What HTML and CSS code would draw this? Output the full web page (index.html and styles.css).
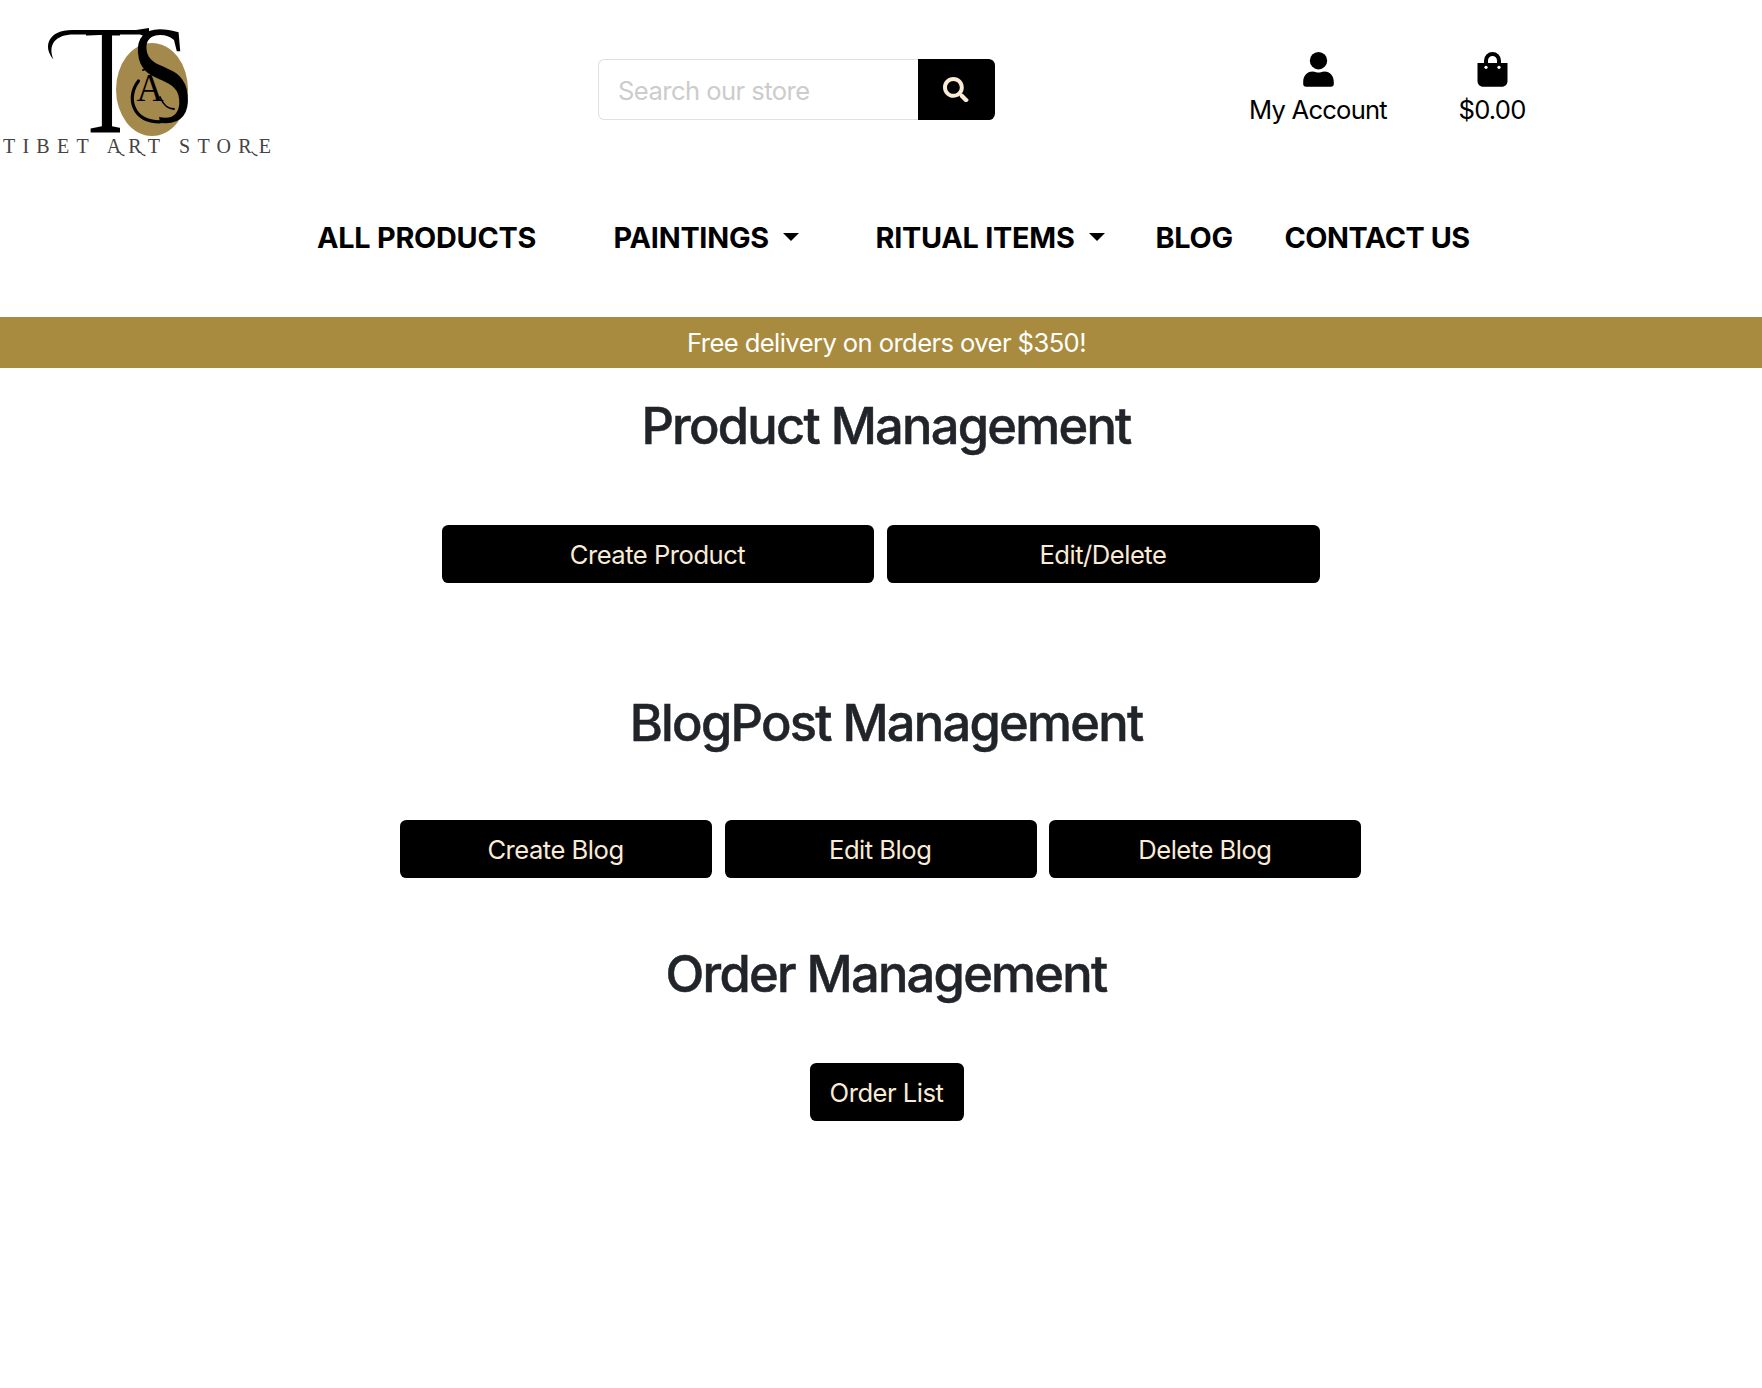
FILE: index.html
```html
<!DOCTYPE html>
<html lang="en">
<head>
<meta charset="utf-8">
<title>Tibet Art Store</title>
<link rel="stylesheet" href="styles.css">
</head>
<body>
<header class="header">
  <div class="topbar">
    <a class="logo" href="#">
      <svg width="280" height="180" viewBox="0 0 280 180" aria-label="Tibet Art Store">
        <clipPath id="bar"><path d="M86 34H120V140H86Z"/></clipPath>
        <clipPath id="bowl"><path d="M120 20H200V130H156V84H120Z"/></clipPath>
        <ellipse class="logo-disc" cx="152" cy="89.500" rx="36" ry="46.500"/>
        <path class="fill" d="M53.500 59.500C42 46 49 30 72 30H136L149 28V38L140 34.500H74C55 34.500 47.500 45 53.500 59.500Z"/>
        <text class="mono" x="74" y="132.500" font-size="159" textLength="66" lengthAdjust="spacingAndGlyphs" clip-path="url(#bar)">T</text>
        <text class="mono" transform="translate(-7 0) skewX(5)" x="133" y="121.500" font-size="140" textLength="60" lengthAdjust="spacingAndGlyphs" clip-path="url(#bowl)">S</text>
        <path class="swash" d="M138.500 81C126 97 132 121.800 160 121.800" stroke-width="3.200"/>
        <text class="mono" x="136.500" y="101" font-size="40" textLength="27" lengthAdjust="spacingAndGlyphs">A</text>
        <path class="swash" d="M143 70C147 68 150 69 151 74M160 97C164 106 168 109 174 109" stroke-width="1.800"/>
        <text class="wordmark" x="3" y="153" font-size="20" textLength="268">TIBET ART STORE</text>
        <path class="swash thin" d="M119 152Q121 155 124 155.500M140 152Q142 155 145 155.500M252 152Q254 155 257 155.500"/>
      </svg>
    </a>
    <form class="search">
      <input class="search-input" type="text" placeholder="Search our store">
      <button class="search-btn" type="button" aria-label="Search">
        <svg width="25.600" height="25.600" viewBox="0 0 512 512"><path d="M505 442.700L405.300 343c-4.500-4.500-10.600-7-17-7H372c27.600-35.300 44-79.700 44-128C416 93.100 322.900 0 208 0S0 93.100 0 208s93.100 208 208 208c48.300 0 92.700-16.400 128-44v16.300c0 6.400 2.500 12.500 7 17l99.700 99.700c9.400 9.400 24.600 9.400 33.900 0l28.300-28.300c9.400-9.400 9.400-24.600.1-34zM208 336c-70.700 0-128-57.200-128-128 0-70.700 57.200-128 128-128 70.700 0 128 57.200 128 128 0 70.700-57.200 128-128 128z"/></svg>
      </button>
    </form>
    <a class="tool account" href="#">
      <svg width="31" height="35" viewBox="0 0 31 35"><circle cx="15.500" cy="8.700" r="8.700"/><path d="M9.500 19.500C12 19.500 13 20.600 15.500 20.600S19 19.500 21.500 19.500C27 19.500 30.800 24 30.800 30V32C30.800 33.700 29.600 34.800 28 34.800H3C1.400 34.800.2 33.700.2 32V30C.2 24 4 19.500 9.500 19.500Z"/></svg>
      <span>My Account</span>
    </a>
    <a class="tool bag" href="#">
      <svg width="31" height="35" viewBox="0 0 31 35"><path d="M.5 11H30.500V29C30.500 32.400 28 34.800 24.800 34.800H6.200C3 34.800.5 32.400.5 29Z"/><path class="handle" d="M9 12V8.500A6.500 6.500 0 0 1 22 8.500V12"/><circle class="hole" cx="9" cy="15.300" r="1.600"/><circle class="hole" cx="22" cy="15.300" r="1.600"/></svg>
      <span>$0.00</span>
    </a>
  </div>
  <nav class="nav">
    <a class="nav-link all" href="#">ALL PRODUCTS</a>
    <a class="nav-link paintings" href="#">PAINTINGS<i class="caret"></i></a>
    <a class="nav-link ritual" href="#">RITUAL ITEMS<i class="caret"></i></a>
    <a class="nav-link blog" href="#">BLOG</a>
    <a class="nav-link contact" href="#">CONTACT US</a>
  </nav>
</header>
<div class="banner">Free delivery on orders over $350!</div>
<main class="main">
  <section class="product">
    <h2 class="title">Product Management</h2>
    <div class="row two"><a class="btn" href="#">Create Product</a><a class="btn" href="#">Edit/Delete</a></div>
  </section>
  <section class="blogpost">
    <h2 class="title">BlogPost Management</h2>
    <div class="row three"><a class="btn" href="#">Create Blog</a><a class="btn" href="#">Edit Blog</a><a class="btn" href="#">Delete Blog</a></div>
  </section>
  <section class="order">
    <h2 class="title">Order Management</h2>
    <div class="row one"><a class="btn" href="#">Order List</a></div>
  </section>
</main>
</body>
</html>
```
FILE: styles.css
```css
* { box-sizing: border-box; }
body {
  margin: 0;
  background: #fff;
  color: #212529;
  font-family: Inter, "Liberation Sans", sans-serif;
  font-size: 25.600px;
  line-height: 38.400px;
  letter-spacing: -0.500px;
}
a { color: inherit; text-decoration: none; }
.header { height: 317px; color: #000; }
.topbar { display: flex; height: 180px; }
.logo { width: 598px; }
.logo svg { display: block; }
.logo-disc { fill: #a3894c; }
.mono, .wordmark { font-family: "Liberation Serif", serif; letter-spacing: 0; fill: #000; }
.wordmark { fill: #444; }
.swash { fill: none; stroke: #000; stroke-linecap: round; }
.thin { stroke: #444; stroke-width: 1.300; }
.search { display: flex; width: 397px; height: 61px; margin-top: 59px; }
.search-input {
  width: 320px;
  padding: 3px 19px 0;
  border: 1px solid #dee2e6;
  border-right: 0;
  border-radius: 6.400px 0 0 6.400px;
  font: inherit;
  letter-spacing: -0.560px;
}
.search-input::placeholder { color: #ccc; opacity: 1; }
.search-btn {
  width: 77px;
  padding: 0 1px 0 0;
  border: 0;
  border-radius: 0 6.400px 6.400px 0;
  background: #000;
  fill: #faebd7;
}
.search-btn svg { display: block; margin: 0 auto; }
.tool { display: flex; flex-direction: column; align-items: center; padding-top: 52px; white-space: nowrap; letter-spacing: -0.780px; }
.tool svg { margin-bottom: 4px; }
.account { width: 138px; margin-left: 254px; }
.bag { width: 66px; margin-left: 72px; }
.handle { fill: none; stroke: #000; stroke-width: 4; }
.hole { fill: #fff; }
.nav {
  display: flex;
  padding: 36px 0 0 317px;
  font-size: 28.800px;
  font-weight: 700;
  line-height: 43px;
  letter-spacing: -0.230px;
}
.nav-link { display: flex; align-items: center; white-space: nowrap; }
.caret {
  margin: -2px 0 0 14px;
  border: 8px solid transparent;
  border-top-color: #000;
  border-bottom: 0;
}
.all { width: 296.500px; }
.paintings { width: 262px; }
.ritual { width: 280px; }
.blog { width: 129px; }
.contact { letter-spacing: -0.450px; }
.banner {
  height: 51px;
  padding: 7px 1px 0 12px;
  background: #a88b3e;
  color: #fff;
  letter-spacing: -0.590px;
  text-align: center;
}
.main { padding-left: 12px; }
.title {
  margin: 0;
  padding-right: 2px;
  font-size: 50.600px;
  font-weight: 500;
  line-height: 61px;
  letter-spacing: -1.750px;
  text-align: center;
  -webkit-text-stroke: 0.500px #212529;
}
.row { display: flex; justify-content: center; gap: 12.800px; }
.btn {
  height: 58px;
  padding: 11px 1px 0 0;
  border-radius: 6.400px;
  background: #000;
  color: #faebd7;
  text-align: center;
  white-space: nowrap;
}
.product { padding-top: 27px; height: 297px; }
.product .row { margin: 69px 12.600px 0 0; }
.two .btn { width: 432.600px; }
.blogpost { padding-top: 27px; height: 251px; }
.blogpost .row { margin: 67px 12.600px 0 0; }
.three .btn { width: 311.900px; }
.order { padding-top: 27px; }
.order .row { margin-top: 59px; }
.one .btn { width: 154px; }
```
